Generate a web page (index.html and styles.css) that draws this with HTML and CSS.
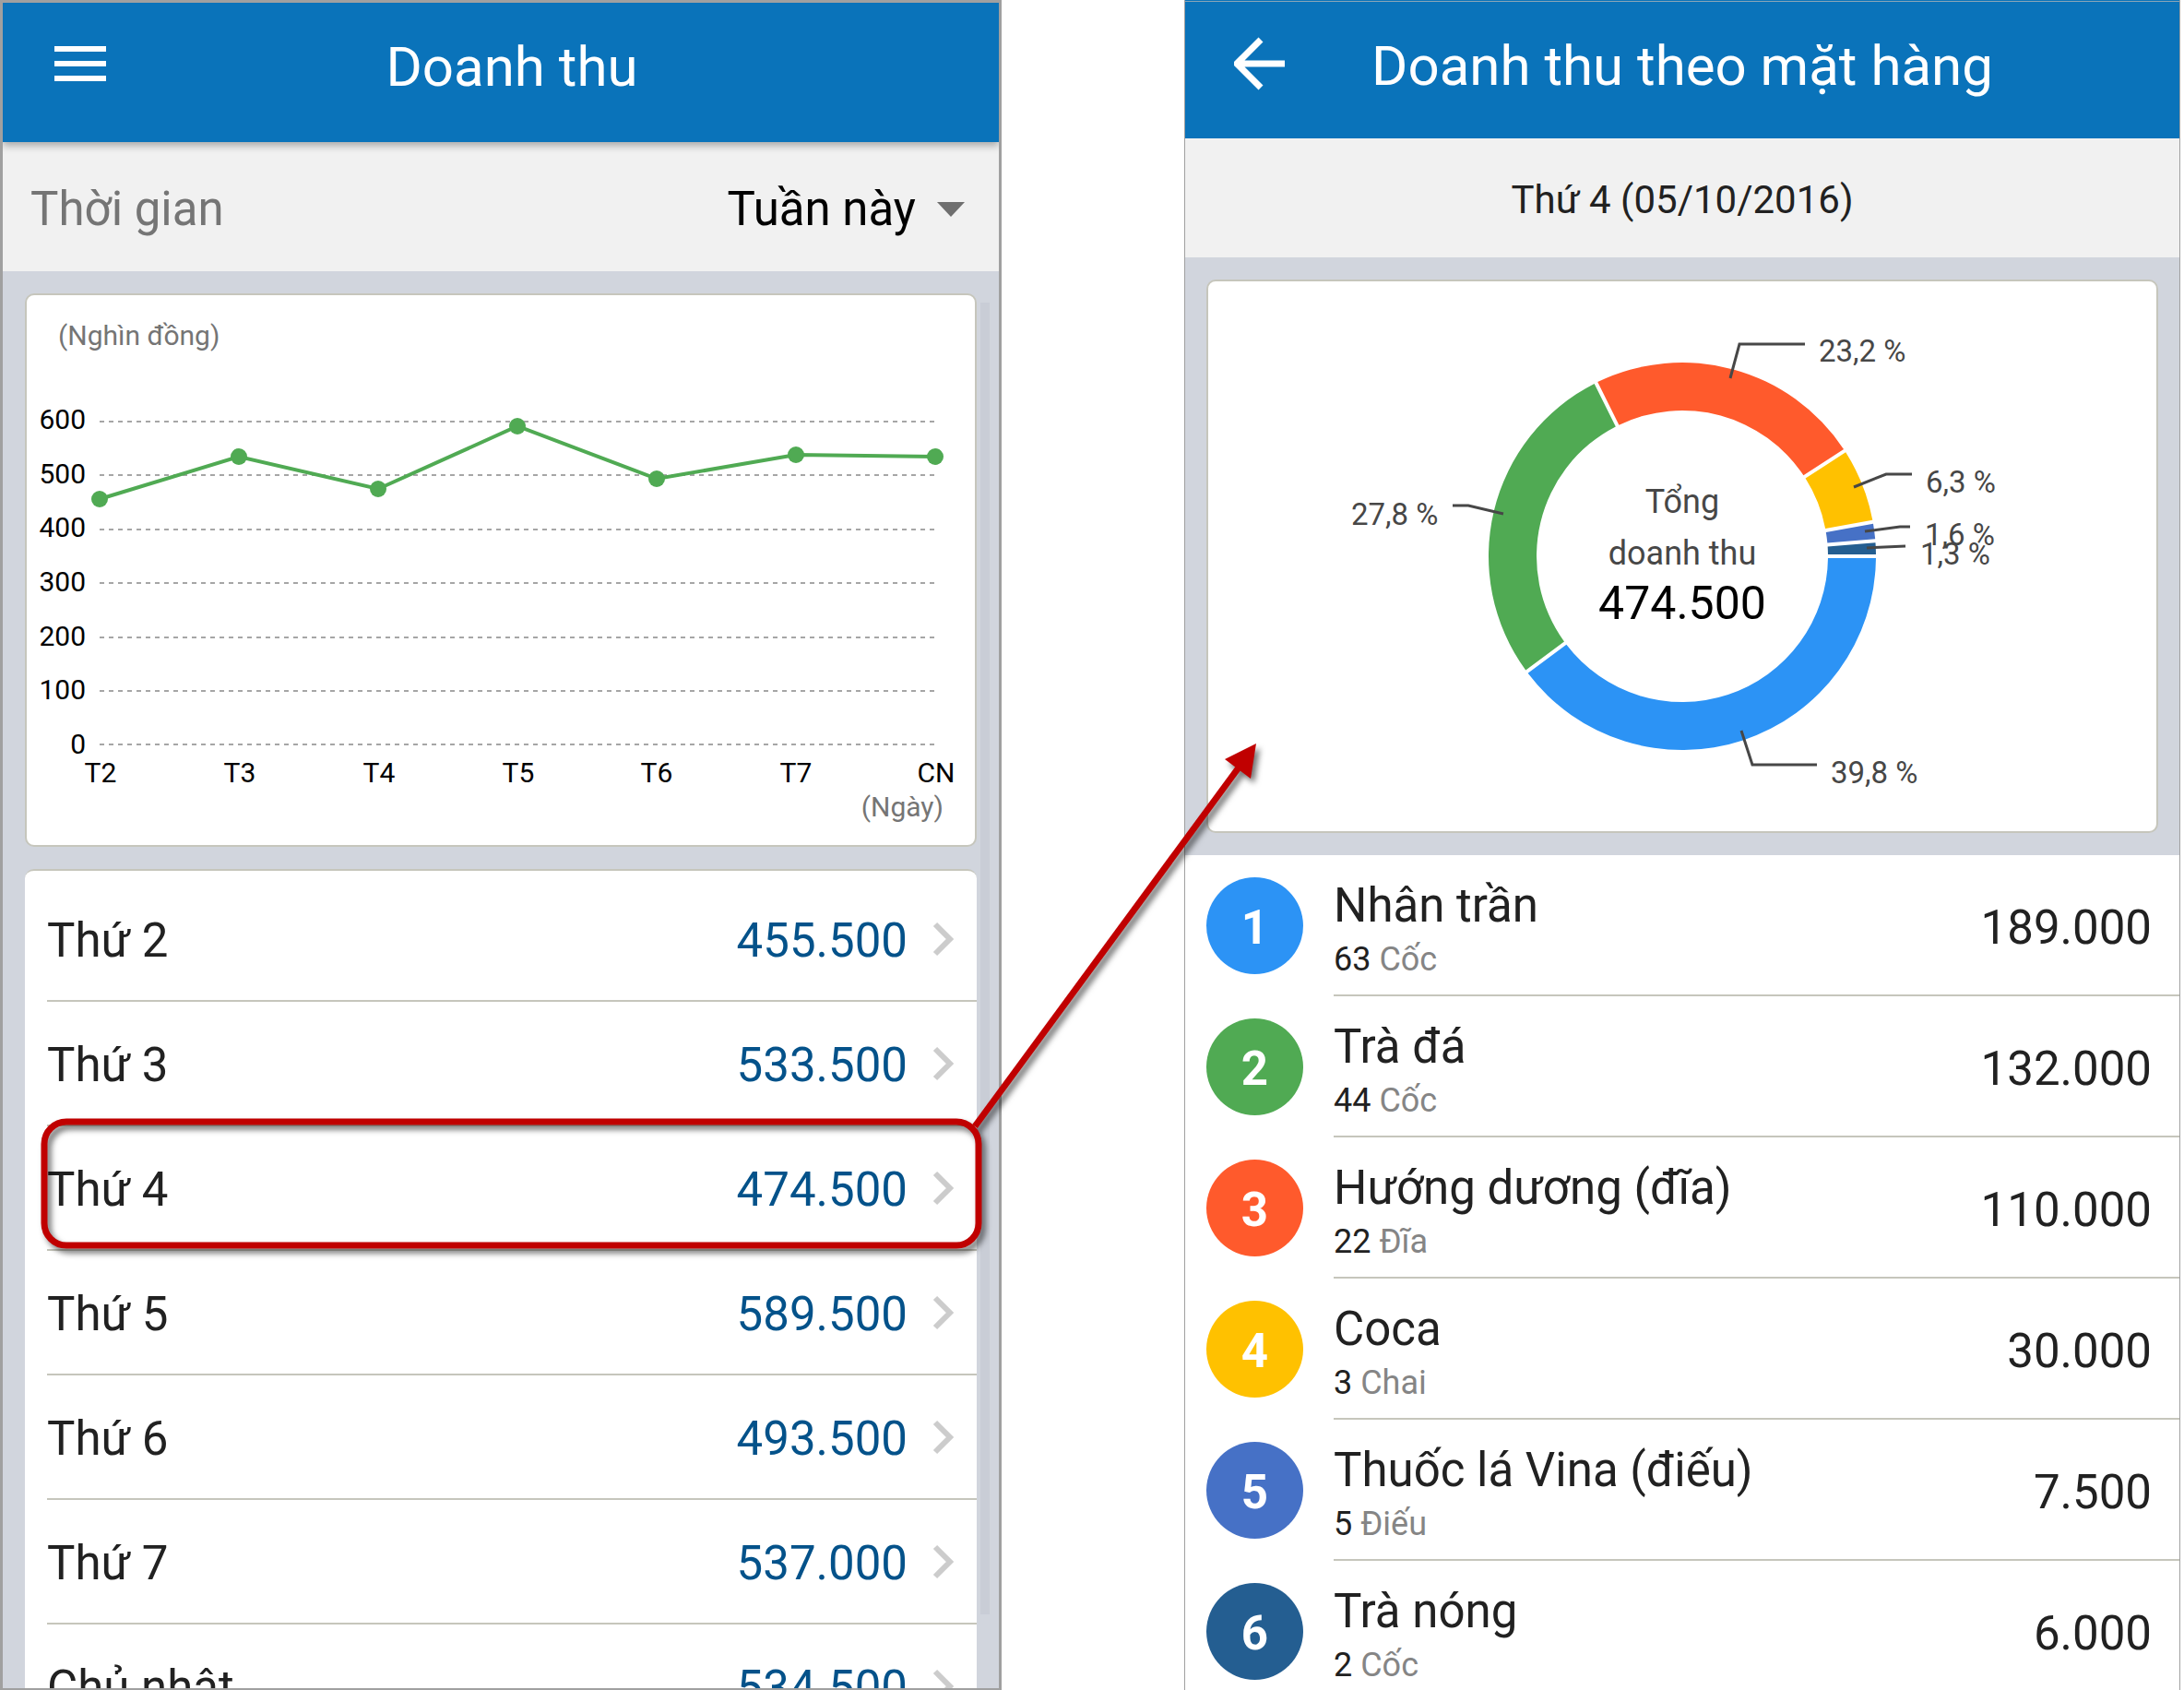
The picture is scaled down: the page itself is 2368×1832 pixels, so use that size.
FILE: index.html
```html
<!DOCTYPE html>
<html lang="vi">
<head>
<meta charset="utf-8">
<title>Doanh thu</title>
<link rel="stylesheet" href="styles.css">
</head>
<body>
<main class="board">
  <section class="phone phone-week">
    <header class="bar bar-week">
      <button class="bar-icon" type="button" aria-label="Menu">
        <svg width="56" height="38" viewBox="0 0 56 38"><path d="M0 3h56M0 19h56M0 35h56" stroke="#fff" stroke-width="6"/></svg>
      </button>
      <h1 class="bar-title">Doanh thu</h1>
    </header>
    <div class="filter">
      <span class="filter-label">Thời gian</span>
      <button class="filter-value" type="button">Tuần này
        <svg width="30" height="16" viewBox="0 0 30 16"><path d="M0 0h30L15 16z" fill="#6f6f6f"/></svg>
      </button>
    </div>
    <div class="week-body">
      <div class="card line-card">
        <svg class="chart" viewBox="0 0 1028 596">
          <g class="unit"><text x="34" y="54">(Nghìn đồng)</text><text x="994" y="565" text-anchor="end">(Ngày)</text></g>
          <g stroke="#a6a6a6" stroke-width="2" stroke-dasharray="5 5">
            <path d="M79 137H985M79 195H985M79 254H985M79 312H985M79 371H985M79 429H985M79 487H985"/>
          </g>
          <g class="axis" text-anchor="end">
            <text x="64" y="145">600</text><text x="64" y="204">500</text><text x="64" y="262">400</text><text x="64" y="321">300</text><text x="64" y="380">200</text><text x="64" y="438">100</text><text x="64" y="497">0</text>
          </g>
          <g class="axis" text-anchor="middle">
            <text x="80" y="528">T2</text><text x="231" y="528">T3</text><text x="382" y="528">T4</text><text x="533" y="528">T5</text><text x="683" y="528">T6</text><text x="834" y="528">T7</text><text x="986" y="528">CN</text>
          </g>
          <path d="M79 221L230 175L381 210L532 142L683 199L834 173L985 175" fill="none" stroke="#50aa53" stroke-width="4"/>
          <g fill="#50aa53"><circle cx="79" cy="221" r="9"/><circle cx="230" cy="175" r="9"/><circle cx="381" cy="210" r="9"/><circle cx="532" cy="142" r="9"/><circle cx="683" cy="199" r="9"/><circle cx="834" cy="173" r="9"/><circle cx="985" cy="175" r="9"/></g>
        </svg>
      </div>
      <ul class="card days">
        <li><a class="day" href="#t2"><span>Thứ 2</span><span class="amount">455.500</span><svg class="chevron" viewBox="0 0 24 38"><path d="M3 3l16 16L3 35"/></svg></a></li>
        <li><a class="day" href="#t3"><span>Thứ 3</span><span class="amount">533.500</span><svg class="chevron" viewBox="0 0 24 38"><path d="M3 3l16 16L3 35"/></svg></a></li>
        <li><a class="day" href="#t4"><span>Thứ 4</span><span class="amount">474.500</span><svg class="chevron" viewBox="0 0 24 38"><path d="M3 3l16 16L3 35"/></svg></a></li>
        <li><a class="day" href="#t5"><span>Thứ 5</span><span class="amount">589.500</span><svg class="chevron" viewBox="0 0 24 38"><path d="M3 3l16 16L3 35"/></svg></a></li>
        <li><a class="day" href="#t6"><span>Thứ 6</span><span class="amount">493.500</span><svg class="chevron" viewBox="0 0 24 38"><path d="M3 3l16 16L3 35"/></svg></a></li>
        <li><a class="day" href="#t7"><span>Thứ 7</span><span class="amount">537.000</span><svg class="chevron" viewBox="0 0 24 38"><path d="M3 3l16 16L3 35"/></svg></a></li>
        <li><a class="day" href="#cn"><span>Chủ nhật</span><span class="amount">534.500</span><svg class="chevron" viewBox="0 0 24 38"><path d="M3 3l16 16L3 35"/></svg></a></li>
      </ul>
      <div class="scroll-thumb"></div>
    </div>
  </section>

  <section class="phone phone-items">
    <header class="bar bar-items">
      <button class="bar-icon" type="button" aria-label="Quay lại">
        <svg width="58" height="58" viewBox="0 0 58 58"><path d="M55 29H5M29 3L3 29l26 26" fill="none" stroke="#fff" stroke-width="7"/></svg>
      </button>
      <h2 class="bar-title">Doanh thu theo mặt hàng</h2>
    </header>
    <p class="date">Thứ 4 (05/10/2016)</p>
    <div class="donut-wrap">
      <div class="card donut-card">
        <svg class="chart" viewBox="0 0 1028 596">
          <g id="ring"></g>
          <g fill="none" stroke="#474747" stroke-width="3">
            <path d="M566 105L576 68H647"/><path d="M700 223L735 209H763"/><path d="M712 271L750 266H761"/><path d="M714 289L756 287"/><path d="M320 252L282 243H265"/><path d="M578 487L590 524H660"/>
          </g>
          <g class="share">
            <text x="662" y="87">23,2 %</text><text x="778" y="229">6,3 %</text><text x="777" y="286">1,6 %</text><text x="772" y="307">1,3 %</text><text x="155" y="264">27,8 %</text><text x="675" y="544">39,8 %</text>
          </g>
          <g class="total" text-anchor="middle"><text x="514" y="251">Tổng</text><text x="514" y="307">doanh thu</text><text class="total-value" x="514" y="366">474.500</text></g>
        </svg>
      </div>
    </div>
    <ol class="items">
      <li class="item"><span class="rank c1">1</span><div class="line"><div class="info"><div class="name">Nhân trần</div><div class="qty">63 <span>Cốc</span></div></div><span class="price">189.000</span></div></li>
      <li class="item"><span class="rank c2">2</span><div class="line"><div class="info"><div class="name">Trà đá</div><div class="qty">44 <span>Cốc</span></div></div><span class="price">132.000</span></div></li>
      <li class="item"><span class="rank c3">3</span><div class="line"><div class="info"><div class="name">Hướng dương (đĩa)</div><div class="qty">22 <span>Đĩa</span></div></div><span class="price">110.000</span></div></li>
      <li class="item"><span class="rank c4">4</span><div class="line"><div class="info"><div class="name">Coca</div><div class="qty">3 <span>Chai</span></div></div><span class="price">30.000</span></div></li>
      <li class="item"><span class="rank c5">5</span><div class="line"><div class="info"><div class="name">Thuốc lá Vina (điếu)</div><div class="qty">5 <span>Điếu</span></div></div><span class="price">7.500</span></div></li>
      <li class="item"><span class="rank c6">6</span><div class="line"><div class="info"><div class="name">Trà nóng</div><div class="qty">2 <span>Cốc</span></div></div><span class="price">6.000</span></div></li>
    </ol>
  </section>

  <svg class="callout" viewBox="0 0 2368 1832">
    <rect x="48" y="1216" width="1013" height="134" rx="24" fill="none" stroke="#c00000" stroke-width="7"/>
    <path d="M1057 1221L1346 828" stroke="#c00000" stroke-width="7"/>
    <path d="M1362 806L1356 844L1328 823z" fill="#c00000"/>
  </svg>
</main>
<script src="ring.js"></script>
</body>
</html>
```
FILE: ring.js
```js
// Draws the revenue ring clockwise from three o'clock.
const slices = [
  [189, '#2c93f5'], [132, '#50aa53'], [110, '#ff5a2c'],
  [30, '#ffc100'], [7.5, '#4671c6'], [6, '#245e91']
];
const total = slices.reduce((sum, s) => sum + s[0], 0);
const ring = document.getElementById('ring');
const cx = 514, cy = 298, inner = 158, outer = 210, gap = 2;
const point = (r, a) => (cx + r * Math.cos(a)) + ' ' + (cy + r * Math.sin(a));
let angle = 0;
for (const [value, color] of slices) {
  const end = angle + value / total * 2 * Math.PI;
  const o = gap / outer, i = gap / inner;
  const path = document.createElementNS('http://www.w3.org/2000/svg', 'path');
  const large = end - angle > Math.PI ? 1 : 0;
  path.setAttribute('d', `M${point(outer, angle + o)}A${outer} ${outer} 0 ${large} 1 ${point(outer, end - o)}L${point(inner, end - i)}A${inner} ${inner} 0 ${large} 0 ${point(inner, angle + i)}Z`);
  path.setAttribute('fill', color);
  ring.appendChild(path);
  angle = end;
}
```
FILE: styles.css
```css
* { box-sizing: border-box; margin: 0; padding: 0; }
body { background: #fff; font-family: Roboto, "Noto Sans", sans-serif; color: #212121; }
button { border: 0; background: none; font: inherit; color: inherit; }
ul, ol { list-style: none; }
a { color: inherit; text-decoration: none; }
svg { display: block; flex: none; }

.board { position: relative; display: grid; grid-template-columns: 1086fr 1080fr; column-gap: 198px; padding-right: 4px; height: 100vh; overflow: hidden; }
.phone { display: flex; flex-direction: column; min-width: 0; height: 100vh; overflow: hidden; }
.phone-week { border: 3px solid #a0a0a0; border-bottom-width: 2px; background: #d1d5dd; }
.phone-items { border: solid #a0a0a0; border-width: 0 1px; background: #fff; }

.bar { position: relative; display: flex; align-items: center; flex: none; background: #0a73ba; color: #fff; }
.bar-week { height: 151px; padding-bottom: 19px; box-shadow: 0 4px 8px rgba(0, 0, 0, .3); z-index: 1; }
.bar-items { height: 150px; padding-bottom: 12px; background: linear-gradient(#0a73ba 1px, #8aa5b8 1px 2px, #0a73ba 2px); }
.bar-icon { position: absolute; left: 56px; display: flex; cursor: pointer; }
.bar-items .bar-icon { left: 53px; }
.bar-title { flex: 1; padding-top: 6px; text-align: center; font-size: 60px; line-height: 72px; font-weight: 400; }
.bar-week .bar-title { padding: 8px 0 0 24px; }

.filter { flex: none; display: flex; justify-content: space-between; align-items: center; height: 140px; padding: 5px 37px 0 30px; background: #f1f1f1; font-size: 51px; line-height: 64px; }
.filter-label { color: #757575; }
.filter-value { display: flex; align-items: center; gap: 23px; color: #000; }

.week-body { position: relative; flex: 1; min-height: 0; padding: 24px 24px 0; display: flex; flex-direction: column; gap: 24px; }
.card { background: #fff; border: 2px solid #c6c6bc; border-radius: 10px; }
.chart { width: 100%; height: auto; }
.unit { font-size: 30px; fill: #757575; }
.axis { font-size: 30px; fill: #000; }
.line-card { flex: none; }

.days { flex: none; border-width: 2px 0 0; padding: 7px 0 0 24px; }
.day { display: flex; align-items: center; height: 135px; padding-right: 24px; border-bottom: 2px solid #c6c6bc; font-size: 51px; line-height: 64px; }
.day span { padding-top: 5px; }
.amount { margin-left: auto; margin-right: 27px; color: #04528a; }
.chevron { width: 24px; height: 38px; fill: none; stroke: #ccc; stroke-width: 6; }
.scroll-thumb { position: absolute; top: 34px; right: 10px; width: 10px; height: 1422px; background: #c9cdd6; }

.date { flex: none; height: 129px; background: #f1f1f1; text-align: center; font-size: 42px; line-height: 134px; }
.donut-wrap { flex: none; padding: 24px 23px; background: #d1d5dd; }
.share { font-size: 33px; fill: #474747; }
.total { font-size: 36px; fill: #474747; }
.total-value { font-size: 50px; fill: #000; }

.item { display: flex; align-items: center; gap: 33px; height: 153px; padding-left: 23px; }
.rank { flex: none; width: 105px; height: 105px; border-radius: 50%; color: #fff; text-align: center; font-size: 51px; line-height: 109px; font-weight: 700; }
.c1 { background: #2c93f5; }
.c2 { background: #50aa53; }
.c3 { background: #ff5a2c; }
.c4 { background: #ffc100; }
.c5 { background: #4671c6; }
.c6 { background: #245e91; }
.line { flex: 1; display: flex; justify-content: space-between; align-items: center; height: 153px; padding: 6px 30px 0 0; border-bottom: 2px solid #c6c6bc; }
.info { padding-top: 4px; }
.name { font-size: 51px; line-height: 64px; }
.qty { font-size: 36px; line-height: 52px; }
.qty span { color: #858585; }
.price { font-size: 51px; line-height: 64px; }

.callout { position: absolute; inset: 0; width: 100%; height: auto; pointer-events: none; filter: drop-shadow(4px 5px 3px rgba(0, 0, 0, .55)); }
```
